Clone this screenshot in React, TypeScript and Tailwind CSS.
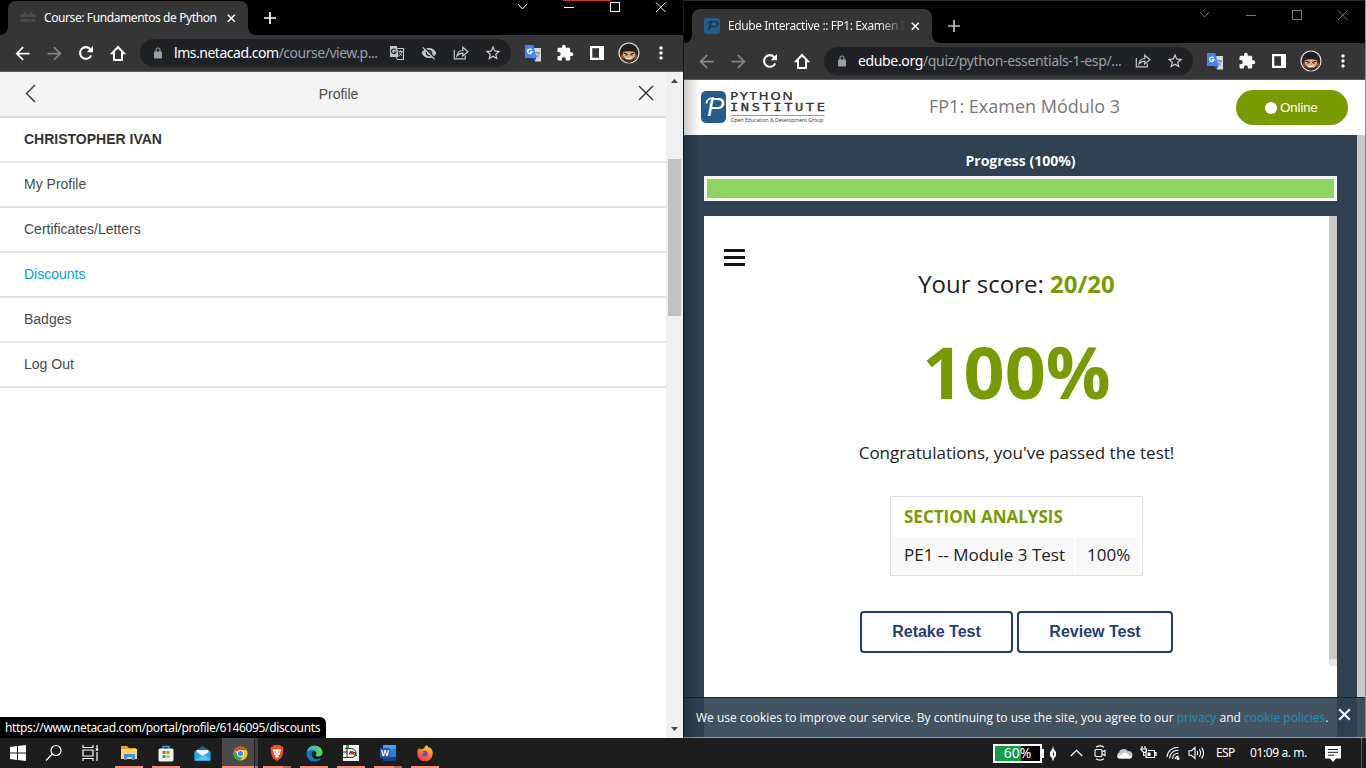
import type { ReactNode } from "react";
import {
  MdArrowBack,
  MdArrowForward,
  MdVisibilityOff,
  MdStarBorder,
  MdExtension,
  MdMoreVert,
} from "react-icons/md";

const Slot = ({ children }: { children: ReactNode }) => (
  <div className="flex h-7 w-8 shrink-0 items-center justify-center">{children}</div>
);

const ReloadIcon = () => (
  <svg width="16" height="16" viewBox="0 0 16 16">
    <path d="M13.200 10.300A5.800 5.800 0 1 1 12.300 4.200" fill="none" stroke="#fff" strokeWidth="2.100" />
    <path d="M15 1v6.300H8.700z" fill="#fff" />
  </svg>
);

const HomeIcon = () => (
  <svg width="16" height="17" viewBox="0 0 16 17" fill="none" stroke="#fff" strokeWidth="2">
    <path d="M8 2L2.200 8.200H4V15h8V8.200h1.800z" />
  </svg>
);

const LockIcon = () => (
  <svg width="8" height="12" viewBox="0 0 8 12">
    <path d="M2 5V3a2 2 0 0 1 4 0v2" fill="none" stroke="#9aa0a6" strokeWidth="1.200" />
    <rect y="4.500" width="8" height="7" rx="1" fill="#9aa0a6" />
  </svg>
);

function TranslateGray() {
  return (
    <svg width="16" height="16" viewBox="0 0 16 16">
      <path d="M1 1h7l1.600 11H1z" fill="#c4c7c9" />
      <path d="M8.500 3.500H14.500V14.500H8.500L7 12.300" fill="none" stroke="#c4c7c9" strokeWidth="1.100" />
      <path d="M9.300 6.500h4.500M11.500 5.300v1.200M13 6.800c-.6 2-1.800 3.200-3 4M10.300 7.500c.8 1.800 2 2.800 3.200 3.500" fill="none" stroke="#c4c7c9" strokeWidth="1" />
      <path d="M6.700 5A2.300 2.300 0 1 0 7 7H4.900" fill="none" stroke="#202124" strokeWidth="1.200" />
    </svg>
  );
}

function TranslateColor() {
  return (
    <svg width="17" height="17" viewBox="0 0 17 17">
      <path d="M6 3h10v13.500h-6z" fill="#d5d8dc" />
      <path d="M9.500 8h5.500M12 6.700v1.300M14 8c-.5 2-1.700 3.300-3.300 4.300M10.800 9.500c.8 1.600 2 2.500 3.200 3" fill="none" stroke="#6b8090" strokeWidth="1" />
      <path d="M0 0h8.300l3.200 13H0z" fill="#4285f4" />
      <path d="M7 13h4.500L9.800 16.300z" fill="#2a56c6" />
      <path d="M6.700 5A2.200 2.200 0 1 0 7 7H4.900" fill="none" stroke="#fff" strokeWidth="1.300" />
    </svg>
  );
}

const ShareIcon = () => (
  <svg width="16" height="16" viewBox="0 0 16 16" fill="none" stroke="#c4c7c9" strokeWidth="1.200">
    <path d="M1.300 5V13.800H12.300V10.500" />
    <path d="M4 11C4.400 7.500 6.500 5.600 9.800 5.500V2.200L15 6.800L9.800 11V8.200C7.200 8.200 5.500 9 4 11Z" />
  </svg>
);

const SidePanel = () => (
  <svg width="14" height="14" viewBox="0 0 14 14">
    <path d="M0 0h14v14H0zM2.300 2.300v9.400H9V2.300z" fill="#fff" fillRule="evenodd" />
  </svg>
);

const Avatar = () => (
  <svg width="22" height="22" viewBox="0 0 22 22">
    <circle cx="11" cy="11" r="10" fill="#2b2625" stroke="#e4e4e4" strokeWidth="1.200" />
    <path d="M2.500 15l2-4 1.500 7zM19.500 15l-2-4-1.500 7z" fill="#b34a23" />
    <path d="M5 9h12v5L14 18.500H8L5 14z" fill="#d9aa84" />
    <path d="M4.500 10C4 4.500 6.500 2.500 11 2.500s7 2 6.500 7.500c-4-1-9-1-13 0z" fill="#1f1e20" />
    <path d="M5.500 11l4.300 1.500M16.500 11l-4.300 1.500" stroke="#2a1a14" strokeWidth="1.200" />
    <path d="M7.300 13.500h1.500M13.200 13.500h1.500" stroke="#5a3a28" strokeWidth=".8" />
    <path d="M8 15.500l3 .6 3-.6-1.200 1.800H9.200z" fill="#fff" />
    <path d="M6 16l2 1.500h6l2-1.500-2 3.500-3 1.500-3-1.500z" fill="#4a2f22" />
  </svg>
);

const CiscoIcon = () => (
  <svg width="16" height="12" viewBox="0 0 16 12">
    <path d="M1 3v2M3 2v3M5 0v5M7 2v3M9 2v3M11 0v5M13 2v3M15 3v2" stroke="#606164" strokeWidth="1" />
    <text x="1" y="10" fontSize="5" fontWeight="700" fontFamily="Liberation Sans, sans-serif" fill="#606164" textLength="14">cisco</text>
  </svg>
);

const PMark = ({ w, h, ink }: { w: number; h: number; ink: string }) => (
  <svg width={w} height={h} viewBox="0 0 25 32" preserveAspectRatio="none">
    <rect width="25" height="32" rx="5" fill="#245d8d" />
    <text x="6" y="25" fontSize="26" fontStyle="italic" fontFamily="Liberation Sans, sans-serif" fill={ink}>P</text>
    <path d="M5.500 12.500C5.500 8.500 9 6.800 13 7" fill="none" stroke={ink} strokeWidth="1.600" />
  </svg>
);

function WindowControls({ color }: { color: string }) {
  return (
    <svg width="150" height="12" viewBox="0 0 150 12" fill="none" stroke={color}>
      <path d="M1 4l4.500 5L10 4" />
      <path d="M47 7.500h10" strokeWidth="1" />
      <rect x="93.500" y="2.500" width="9" height="9" />
      <path d="M139 2.500l9.500 9.500M148.500 2.500L139 12" />
    </svg>
  );
}

type BrowserProps = {
  icon: ReactNode;
  title: ReactNode;
  url: ReactNode;
  pageIcons: ReactNode;
  active: boolean;
  stripClass: string;
  controlsClass: string;
  children: ReactNode;
};

function Browser({ icon, title, url, pageIcons, active, stripClass, controlsClass, children }: BrowserProps) {
  const main = active ? "#ffffff" : "#8a8a8a";
  return (
    <div className="flex h-full flex-col">
      <div className={`flex shrink-0 bg-black ${stripClass}`}>
        <svg width="8" height="8" viewBox="0 0 8 8" className="self-end"><path d="M8 0v8H0a8 8 0 0 0 8-8z" fill="#353535" /></svg>
        <div className="flex h-[34px] w-60 items-center rounded-t-lg bg-[#353535] pr-[11px] pl-3">
          <span className="flex w-4 justify-center">{icon}</span>
          <span className="ml-2 w-[175px] text-xs whitespace-nowrap text-white">{title}</span>
          <svg width="9" height="9" viewBox="0 0 9 9" className="ml-2 shrink-0">
            <path d="M.8.8l7 7M7.800.8l-7 7" stroke="#fff" strokeWidth="1.500" />
          </svg>
        </div>
        <svg width="8" height="8" viewBox="0 0 8 8" className="self-end"><path d="M0 0v8h8a8 8 0 0 1-8-8z" fill="#353535" /></svg>
        <svg width="12" height="12" viewBox="0 0 12 12" className="mt-[11px] ml-2">
          <path d="M6 0v12M0 6h12" stroke={active ? "#fff" : "#c0c0c0"} strokeWidth="1.700" />
        </svg>
        <div className={`ml-auto ${controlsClass}`}>
          <WindowControls color={active ? "#ffffff" : "#777777"} />
        </div>
      </div>
      <div className="flex h-9 shrink-0 items-center bg-[#353535] pl-1.5">
        <Slot><MdArrowBack size={21} color={main} /></Slot>
        <Slot><MdArrowForward size={21} color="#858585" /></Slot>
        <Slot><ReloadIcon /></Slot>
        <Slot><HomeIcon /></Slot>
        <div className="mx-1.5 flex h-7 min-w-0 flex-1 items-center rounded-full bg-[#202124] pr-0.5 pl-[14px]">
          <LockIcon />
          <span className="ml-3 min-w-0 flex-1 text-sm whitespace-nowrap text-[#9aa0a6]">{url}</span>
          {pageIcons}
          <Slot><ShareIcon /></Slot>
          <Slot><MdStarBorder size={18} color="#d0d2d4" /></Slot>
        </div>
        <Slot><TranslateColor /></Slot>
        <Slot><MdExtension size={18} color="#fff" /></Slot>
        <Slot><SidePanel /></Slot>
        <Slot><Avatar /></Slot>
        <Slot><MdMoreVert size={20} color="#fff" /></Slot>
        <div className="w-1.5" />
      </div>
      {children}
    </div>
  );
}

const menu = ["My Profile", "Certificates/Letters", "Discounts", "Badges", "Log Out"];

function ProfilePage() {
  return (
    <div className="flex min-h-0 flex-1 border-t border-[#5c5a5a] bg-white font-['Liberation_Sans',sans-serif] text-sm text-[#4a4a4a]">
      <div className="flex-1">
        <div className="flex h-[46px] items-center justify-between border-b-2 border-[#dcdcdc] bg-[#f4f4f4] pr-3 pl-[25px]">
          <svg width="12" height="20" viewBox="0 0 12 20" fill="none" stroke="#333" strokeWidth="1.400">
            <path d="M10 1L1.500 9.500L10 18" />
          </svg>
          <span className="pl-[2px]">Profile</span>
          <svg width="16" height="16" viewBox="0 0 16 16" fill="none" stroke="#333" strokeWidth="1.400" className="mb-0.5">
            <path d="M1 1l14 14M15 1L1 15" />
          </svg>
        </div>
        <div className="flex h-[45px] items-center border-b-2 border-[#e6e6e6] pb-0.5 pl-6 font-bold text-[#333]">CHRISTOPHER IVAN</div>
        {menu.map((m) => (
          <div key={m} className={`flex h-[45px] items-center border-b-2 border-[#e6e6e6] pb-0.5 pl-6 ${m === "Discounts" ? "text-[#049fd9]" : ""}`}>
            {m}
          </div>
        ))}
      </div>
      <div className="flex w-[17px] flex-col items-center bg-[#f0f0f0]">
        <svg width="7" height="4" viewBox="0 0 7 4" className="mt-[7px]"><path d="M3.500 0L7 4H0z" fill="#444" /></svg>
        <div className="mt-[76px] h-[157px] w-[13px] bg-[#c1c1c1]" />
        <svg width="7" height="4" viewBox="0 0 7 4" className="mt-auto mb-[7px]"><path d="M0 0h7L3.500 4z" fill="#444" /></svg>
      </div>
    </div>
  );
}

function QuizPage() {
  return (
    <div className="relative flex min-h-0 flex-1 flex-col border-t border-[#5c5a5a] bg-white font-['Open_Sans',sans-serif]">
      <div className="flex h-[55px] shrink-0 items-center pr-[17px] pl-[17px]">
        <div className="-mt-px"><PMark w={25} h={32} ink="#fff" /></div>
        <svg width="130" height="46" viewBox="0 -5 130 46" className="ml-1" fill="#333">
          <text transform="scale(1.3 1)" x="0" y="9.500" fontSize="10.500" fontWeight="600" fontFamily="Open Sans, sans-serif" textLength="48.500">PYTHON</text>
          <text transform="scale(1.3 1)" x="0" y="21.500" fontSize="10.500" fontWeight="400" stroke="#333" strokeWidth=".3" fontFamily="DejaVu Sans Mono, monospace" textLength="73">INSTITUTE</text>
          <path d="M.5 25.500h94" stroke="#7d9cb5" />
          <text x=".5" y="32" fontSize="5.500" fontFamily="Open Sans, sans-serif" textLength="93" lengthAdjust="spacingAndGlyphs">Open Education &amp; Development Group</text>
        </svg>
        <span className="-mt-[3px] ml-[69px] text-lg whitespace-nowrap text-[#777]">FP1: Examen Módulo 3</span>
        <div className="ml-auto flex h-[35px] w-28 items-center justify-center gap-[3px] rounded-full bg-[#7a9a01] pr-px font-['Liberation_Sans',sans-serif] text-[13px] text-white">
          <span className="size-3 rounded-full bg-white" />
          <span>Online</span>
        </div>
      </div>
      <div className="flex min-h-0 flex-1 bg-[#2f4050]">
        <div className="flex flex-1 flex-col px-5">
          <div className="mt-4 h-5 text-center text-sm leading-5 font-bold text-white">Progress (100%)</div>
          <div className="mt-[5px] h-[25px] shrink-0 border-[3px] border-[#f7f7f7] bg-[#8ed460]" />
          <div className="mt-[15px] flex flex-1 bg-white text-[#212121]">
            <div className="flex flex-1 flex-col items-center">
              <svg width="21" height="17" viewBox="0 0 21 17" className="mt-[33px] ml-5 self-start">
                <path d="M0 1.500h21M0 8.500h21M0 15.500h21" stroke="#151515" strokeWidth="2.800" />
              </svg>
              <div className="text-2xl leading-9 whitespace-nowrap">
                Your score: <b className="text-[#7a9a01]">20/20</b>
              </div>
              <div className="mt-5 text-[72px] leading-[98px] font-bold text-[#7a9a01]">100%</div>
              <div className="mt-[21px] text-[17px] leading-6 whitespace-nowrap">Congratulations, you've passed the test!</div>
              <div className="mt-[31px] h-20 w-[253px] border border-[#ddd] px-0.5 text-[17px]">
                <div className="flex h-10 items-center pl-[11px] font-bold text-[#7a9a01]">SECTION ANALYSIS</div>
                <div className="flex h-9 gap-0.5 whitespace-nowrap">
                  <div className="flex w-[181px] items-center bg-[#f8f8f8] pl-[11px]">PE1 -- Module 3 Test</div>
                  <div className="flex flex-1 items-center bg-[#f8f8f8] pl-[11px]">100%</div>
                </div>
              </div>
              <div className="mt-[35px] flex gap-1 font-['Liberation_Sans',sans-serif] text-base font-bold text-[#1f3f74]">
                <button className="h-[42px] w-[153px] rounded border-2 border-[#1f3f74]">Retake Test</button>
                <button className="h-[42px] w-[156px] rounded border-2 border-[#1f3f74]">Review Test</button>
              </div>
            </div>
            <div className="w-2">
              <div className="h-[443px] bg-[#c9c9c9]" />
              <div className="h-[7px] bg-[#e6e6e6]" />
            </div>
          </div>
        </div>
        <div className="w-2 bg-[#c9c9c9]" />
      </div>
      <div className="absolute right-0 bottom-0 left-0 flex h-[41px] items-center border-t border-b border-t-[#18222c] border-b-[#999] bg-[#2f4050]/90 pl-3 text-xs text-white">
        <span className="whitespace-nowrap">
          We use cookies to improve our service. By continuing to use the site, you agree to our{" "}
          <span className="text-[#1c90bc]">privacy</span> and <span className="text-[#1c90bc]">cookie policies</span>.
        </span>
        <svg width="13" height="13" viewBox="0 0 13 13" className="absolute top-[10px] right-[14px]">
          <path d="M1.200 1.200l10.600 10.600M11.800 1.200L1.200 11.800" stroke="#f2f2f2" strokeWidth="2.200" />
        </svg>
      </div>
      <div className="absolute top-0 bottom-0 left-0 w-4 bg-linear-to-r from-black/20 to-transparent" />
    </div>
  );
}

function TaskItem({ children, width, bar = "" }: { children: ReactNode; width: string; bar?: string }) {
  return (
    <div className={`flex h-full shrink-0 flex-col items-center ${width}`}>
      <div className="flex h-7 items-center justify-center pt-0.5">{children}</div>
      {bar && (
        <div className="flex h-0.5 w-7">
          <div className="flex-1 bg-[#f98c7c]" />
          {bar === "multi" && <div className="w-2 bg-[#b56e64]" />}
        </div>
      )}
    </div>
  );
}

function Taskbar() {
  return (
    <div className="flex h-[30px] shrink-0 overflow-hidden bg-[#1e1d1d] font-['Noto_Sans',sans-serif] text-xs text-white">
      <TaskItem width="w-9">
        <svg width="16" height="16" viewBox="0 0 16 16" fill="#fff"><path d="M0 2l7-1v6.500H0zM8 .9L16 0v7.500H8zM0 8.500h7V15l-7-1zM8 8.500h8V16l-8-1z" /></svg>
      </TaskItem>
      <TaskItem width="w-9">
        <svg width="18" height="18" viewBox="0 0 18 18" fill="none" stroke="#fff" strokeWidth="1.200"><circle cx="11" cy="6.500" r="5" /><path d="M7.400 10L1 16.500" /></svg>
      </TaskItem>
      <TaskItem width="w-9">
        <svg width="17" height="16" viewBox="0 0 17 16" fill="none" stroke="#fff" strokeWidth="1.200"><path d="M1 0v2.500h10V0M1 16v-2.500h10V16M1 5h10v6H1zM15 0v3M15 7v9" /><path d="M13.700 4.500h2.500" strokeWidth="2.400" /></svg>
      </TaskItem>
      <TaskItem width="w-[42px]" bar="one">
        <svg width="18" height="16" viewBox="0 0 18 16"><path d="M1 1h6l2 2h7v11H1z" fill="#e9a520" /><path d="M1 4h16v10H1z" fill="#ffd667" /><path d="M4 15V9h11v6h-3v-3H7v3z" fill="#3f8ee0" /></svg>
      </TaskItem>
      <TaskItem width="w-8" bar="one">
        <svg width="16" height="17" viewBox="0 0 16 17"><path d="M5 4V1.500h6V4" fill="none" stroke="#28a8ea" strokeWidth="1.400" /><rect x=".5" y="3.500" width="15" height="13" rx="1.500" fill="#f4f4f4" /><path d="M4.500 6h3v3h-3z" fill="#f25022" /><path d="M8.500 6h3v3h-3z" fill="#7fba00" /><path d="M4.500 10h3v3h-3z" fill="#00a4ef" /><path d="M8.500 10h3v3h-3z" fill="#ffb900" /></svg>
      </TaskItem>
      <TaskItem width="w-[41px]">
        <svg width="17" height="15" viewBox="0 0 17 15"><path d="M.5 5L8.500 0l8 5v9.500H.5z" fill="#1765ad" /><path d="M2.500 4h12v3l-6 4-6-4z" fill="#f3f3f3" /><path d="M.5 5l8 5 8-5v9.500H.5z" fill="#29a7e8" /><path d="M.5 14.500L11 8.500l5.500 6z" fill="#55c4f4" /></svg>
      </TaskItem>
      <div className="-ml-px flex w-8 shrink-0 flex-col items-center bg-[#4b4a4a]">
        <div className="flex h-7 items-center pt-0.5 pl-1">
          <svg width="15" height="15" viewBox="0 0 16 16"><circle cx="8" cy="8" r="7.500" fill="#fbc116" /><path d="M8 8L1.500 4.200A7.500 7.500 0 0 1 14.500 4.300H8z" fill="#ea4335" /><path d="M1.500 4.200A7.500 7.500 0 0 0 7.500 15.500L10.700 10 5 9.500z" fill="#34a853" /><circle cx="8" cy="8" r="3.700" fill="#fff" /><circle cx="8" cy="8" r="2.800" fill="#4285f4" /></svg>
        </div>
        <div className="h-0.5 w-full bg-[#f98c7c]" />
      </div>
      <div className="ml-px flex w-[3px] shrink-0 flex-col justify-end bg-[#403f3f]"><div className="h-0.5 bg-[#b56e64]" /></div>
      <TaskItem width="w-[38px]" bar="multi">
        <svg width="14" height="16" viewBox="0 0 14 16"><path d="M4 0h6l1.500 1.500 1.500.3.500 2-1 6.500L11 13l-4 3-4-3-1.500-2.700L.5 3.800l.5-2 1.500-.3z" fill="#fb4b22" /><path d="M2.500 4.500L5 4l2 .6L9 4l2.500.5-1.700 3.700.3 1L8 10.500l1 1L7 13l-2-1.500 1-1L3.900 9.200l.3-1z" fill="#fff" /><path d="M4.500 6L6 6.500 5.500 8M9.500 6L8 6.500l.5 1.500M7 8v1.500" stroke="#fb4b22" strokeWidth=".8" fill="none" /></svg>
      </TaskItem>
      <TaskItem width="w-9" bar="one">
        <svg width="17" height="17" viewBox="0 0 17 17"><defs><linearGradient id="edge" x1="0" x2="1" y1="0" y2=".3"><stop stopColor="#35a6df" /><stop offset="1" stopColor="#5bd65b" /></linearGradient></defs><path d="M.5 8C1 3.500 4 .5 8.500.5s8 3 8 7c0 2.500-2 4-4.500 4-2 0-2.500-.8-2-1.500 1-1.500.5-3.500-1.500-4.200C5.500 4.700 1.500 6 .5 8z" fill="url(#edge)" /><path d="M.5 8c1.300-2.500 5-3.600 7.500-2.500-2 .8-3 3-2 5.500 1.500 3.500 6 4 9.500 2-1.500 2.500-4 3.700-7 3.500C4 16.500.3 13 .5 8z" fill="#1474c9" /></svg>
      </TaskItem>
      <TaskItem width="w-[38px]" bar="one">
        <svg width="16" height="16" viewBox="0 0 16 16" fill="none"><rect width="16" height="16" fill="#f1f1f1" /><path d="M2 3.500h6.500a4.500 4.500 0 0 1 0 9H4V3.500M0 12.500h4M0 7h5" stroke="#333" /><path d="M6 9.500a3.500 2.500 0 0 1 7 0M7 6l7 5" stroke="#222" /><path d="M9 6l2 3.500H7z" fill="#d33" /><rect x="3" width="3" height="3" fill="#16c316" /></svg>
      </TaskItem>
      <TaskItem width="w-9" bar="multi">
        <svg width="16" height="16" viewBox="0 0 16 16"><rect x="3" y="0" width="13" height="16" rx="1" fill="#2b7cd3" /><path d="M3 0h13v4H3z" fill="#41a5ee" /><path d="M3 12h13v4H3z" fill="#103f91" /><rect y="3" width="10" height="10" rx="1" fill="#185abd" /><text x="1" y="11" fontSize="8.500" fontWeight="700" fontFamily="Liberation Sans, sans-serif" fill="#fff">W</text></svg>
      </TaskItem>
      <TaskItem width="w-[38px]" bar="one">
        <svg width="16" height="16" viewBox="0 0 16 16"><defs><linearGradient id="ff" x1=".8" x2=".3" y1="0" y2="1"><stop stopColor="#ffde3c" /><stop offset=".5" stopColor="#ff7f27" /><stop offset="1" stopColor="#f0305f" /></linearGradient></defs><path d="M9 0c2 1 2.700 2.500 3 3.500l.5-1.500C15 4 16 6.500 15.700 9A7.700 7.700 0 0 1 .3 8.500C.2 6 1 4 2.500 2.500V4.300L5.500 4C6.500 3.500 8.300 2 9 0z" fill="url(#ff)" /><path d="M5.500 6.500c2-1.500 5-.5 5.300 2 .2 2-1.500 3-3 2.900-1.700 0-3-1-3-2.400l2.500-.5z" fill="#7442c8" /></svg>
      </TaskItem>

      <div className="ml-auto flex shrink-0 items-center">
        <div className="flex h-[19px] w-[49px] items-center justify-center border-2 border-white bg-[linear-gradient(90deg,#169c4b_57%,#000_57%)] text-sm leading-none">
          60%
        </div>
        <div className="h-[9px] w-0.5 bg-white" />
        <div className="flex w-[20px] justify-center">
          <svg width="6" height="16" viewBox="0 0 6 16" fill="#fff" className="mr-0.5"><path d="M3 .5l.5 3L6 7v4l-2 2-.5 2.500h-1L2 13 0 11V7l2.500-3.500z" /><path d="M3.500 7.500v3" stroke="#222" /></svg>
        </div>
        <div className="flex w-6 justify-center"><svg width="13" height="8" viewBox="0 0 13 8" fill="none" stroke="#fff" strokeWidth="1.200"><path d="M.8 7l5.700-5.700L12.200 7" /></svg></div>
        <div className="flex w-6 justify-center">
          <svg width="12" height="16" viewBox="0 0 12 16" fill="none" stroke="#fff" strokeWidth="1.100"><rect x="1" y="4.500" width="7" height="7" rx="1" /><path d="M8 7l3-1.500v5L8 9M2 2.200C4.500.5 7.500.5 10 2.200M2 13.800c2.500 1.700 5.500 1.700 8 0" /></svg>
        </div>
        <div className="flex w-6 justify-center">
          <svg width="17" height="11" viewBox="0 0 17 11"><path d="M3.500 10.500A3.200 3.200 0 0 1 3 4.500a5 5 0 0 1 9-1.300 3.800 3.800 0 0 1 2 7.300z" fill="#c8c8c8" /><path d="M1 8.500l8-4 7 4.500-1.500 1.500h-12z" fill="#fff" /></svg>
        </div>
        <div className="flex w-6 justify-center">
          <svg width="17" height="14" viewBox="0 0 17 14" fill="none" stroke="#fff" strokeWidth="1.200"><path d="M2 0v3M5 0v3M.6 3h6v1.500Q6.600 6.500 3.600 6.500zM3.600 6.500V9.500H5M6 4.500V11.500H14.500V4.500H8M14.500 6.700h1.600v2.600h-1.600" /><path d="M7.500 6.500h3v3.500h-3z" fill="#fff" stroke="none" /></svg>
        </div>
        <div className="flex w-[26px] justify-center">
          <svg width="14" height="14" viewBox="0 0 14 14" fill="none" stroke="#fff" strokeWidth="1.100"><path d="M1 11C1.500 5 6 1.200 12.500 1.200M3.500 12.500C4 7.500 7.500 4.300 12.500 4.200M6.500 13c.3-3.500 2.700-5.800 6-5.800M9.300 13c.2-1.700 1.400-2.800 3.200-2.900" /><circle cx="12" cy="12.500" r="1" fill="#fff" /></svg>
        </div>
        <div className="flex w-5 justify-center">
          <svg width="17" height="14" viewBox="0 0 17 14" fill="none" stroke="#fff" strokeWidth="1.100"><path d="M1 4.700h2.500L7 1.500v11L3.500 9.300H1zM9 5q1.300 2 0 4M11.300 3.300q2.600 3.700 0 7.400M13.600 1.700q4 5.300 0 10.600" /></svg>
        </div>
        <span className="ml-[10px] w-[34px] text-xs tracking-[-0.6px]">ESP</span>
        <span className="w-[57px] tracking-[-0.4px] whitespace-nowrap">01:09 a. m.</span>
        <svg width="16" height="16" viewBox="0 0 16 16" className="mt-0.5 ml-[18px]"><path d="M0 0h16v12.500h-5L8 16l-3-3.500H0z" fill="#fff" /><path d="M3 3.500h10M3 6.300h10M3 9.200h6" stroke="#1e1d1d" /></svg>
        <div className="ml-5 h-[30px] w-px bg-[#5c5c5c]" />
        <div className="w-1" />
      </div>
    </div>
  );
}

export default function App() {
  return (
    <div className="flex h-[768px] w-[1366px] flex-col overflow-hidden bg-black">
      <div className="flex h-[738px] shrink-0 font-['Noto_Sans',sans-serif]">
        <div className="relative w-[683px]">
          <Browser
            active
            icon={<CiscoIcon />}
            title={<span className="tracking-[-0.4px]">Course: Fundamentos de Python</span>}
            url={<span className="tracking-[-0.48px]"><span className="text-white">lms.netacad.com</span>/course/view.p...</span>}
            pageIcons={
              <>
                <Slot><TranslateGray /></Slot>
                <Slot><MdVisibilityOff size={16} color="#c4c7c9" /></Slot>
              </>
            }
            stripClass="h-[35px] pt-px"
            controlsClass="mr-4 -mt-px"
          >
            <ProfilePage />
          </Browser>
          <div className="absolute top-0 left-[563px] h-px w-12 bg-[#c23c2b]" />
          <div className="absolute bottom-0 left-0 flex h-[21px] items-center rounded-tr-md bg-black pr-[6px] pl-[5px] text-xs tracking-[-0.36px] whitespace-nowrap text-white">
            https://www.netacad.com/portal/profile/6146095/discounts
          </div>
        </div>
        <div className="w-px bg-[#151515]" />
        <div className="w-[681px] border-t border-[#2b2b2b]">
          <Browser
            active={false}
            icon={<PMark w={16} h={16} ink="#1c3147" />}
            title={<span className="block w-[177px] bg-linear-to-r from-white from-85% to-transparent bg-clip-text tracking-[-0.42px] text-transparent">Edube Interactive :: FP1: Examen I</span>}
            url={<span className="tracking-[-0.35px]"><span className="text-white">edube.org</span>/quiz/python-essentials-1-esp/...</span>}
            pageIcons={null}
            stripClass="h-[42px] pt-2"
            controlsClass="mr-4 -mt-px"
          >
            <QuizPage />
          </Browser>
        </div>
        <div className="w-px bg-[#8a8a8a]" />
      </div>
      <Taskbar />
    </div>
  );
}
